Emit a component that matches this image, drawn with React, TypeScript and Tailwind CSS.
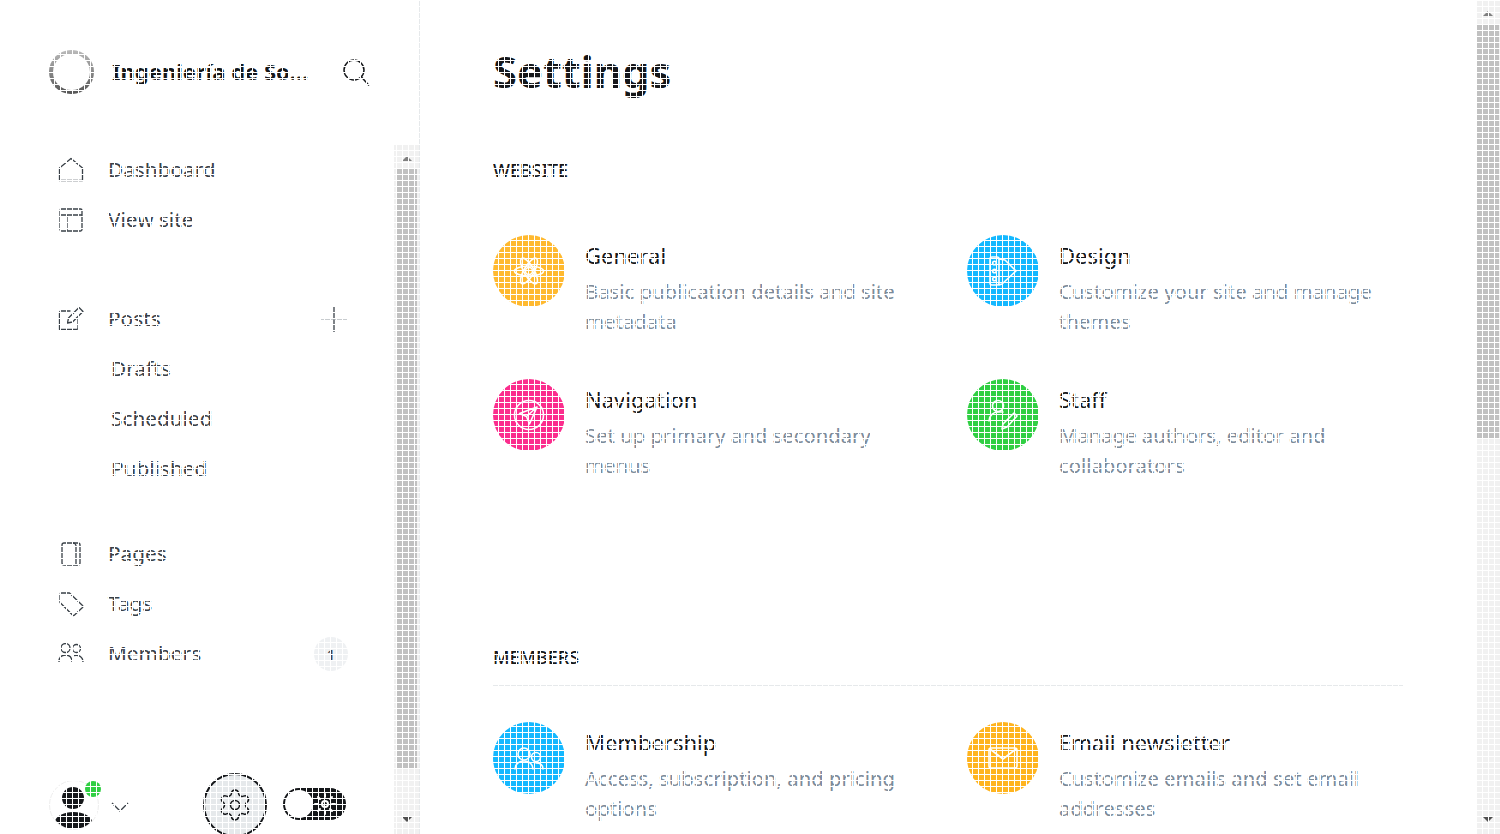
import { Settings } from "lucide-react";

const sans = "font-['Noto_Sans','Liberation_Sans',sans-serif]";

function HomeIcon() {
  return (
    <svg width="26" height="26" viewBox="0 0 26 26" fill="none" stroke="#394047" strokeWidth="1.3" strokeLinejoin="round">
      <path d="M1.5 11 13 1.5 24.5 11v12.500h-23z" />
    </svg>
  );
}
function SiteIcon() {
  return (
    <svg width="26" height="26" viewBox="0 0 26 26" fill="none" stroke="#394047" strokeWidth="1.3" strokeLinejoin="round">
      <rect x="2" y="2" width="22" height="22" rx="1.5" />
      <path d="M2 8h22M9 8v16" />
    </svg>
  );
}
function PostsIcon() {
  return (
    <svg width="26" height="26" viewBox="0 0 26 26" fill="none" stroke="#394047" strokeWidth="1.3" strokeLinejoin="round" strokeLinecap="round">
      <path d="M12 5H3a1.500 1.500 0 0 0-1.500 1.500v17h17a1.500 1.500 0 0 0 1.500-1.500v-9" />
      <path d="M9.500 17l1-5L21 1.500l4 4L14.500 16z" />
    </svg>
  );
}
function PagesIcon() {
  return (
    <svg width="26" height="26" viewBox="0 0 26 26" fill="none" stroke="#394047" strokeWidth="1.3" strokeLinejoin="round">
      <path d="M6 2h14a2 2 0 0 1 2 2v18a2 2 0 0 1-2 2h-2" />
      <path d="M6 2a2 2 0 0 0-2 2v18a2 2 0 0 0 2 2h12V5a3 3 0 0 0-3-3" />
    </svg>
  );
}
function TagIcon() {
  return (
    <svg width="26" height="26" viewBox="0 0 26 26" fill="none" stroke="#394047" strokeWidth="1.3" strokeLinejoin="round">
      <path d="M2 3.500A1.500 1.500 0 0 1 3.500 2h8L24.500 14.500a1.500 1.500 0 0 1 0 2L16.500 24a1.500 1.500 0 0 1-2 0L2 11.500z" />
    </svg>
  );
}
function MembersIcon() {
  return (
    <svg width="26" height="26" viewBox="0 0 26 26" fill="none" stroke="#394047" strokeWidth="1.3" strokeLinejoin="round">
      <circle cx="7.500" cy="7" r="4.500" />
      <circle cx="18.500" cy="7.500" r="4" />
      <path d="M1 21c0-5 3-7 6.500-7s6.500 2 6.500 7M16 14.500c5-1 9 1.500 9 6.500" />
    </svg>
  );
}

function SearchIcon() {
  return (
    <svg width="28" height="28" viewBox="0 0 28 28" fill="none" stroke="#15171a" strokeWidth="1.5">
      <circle cx="12" cy="11" r="10" />
      <path d="M19.500 18 27 26.500" />
    </svg>
  );
}

function NavRow({ icon, label, right }: { icon?: React.ReactNode; label: string; right?: React.ReactNode }) {
  return (
    <div className="flex h-[50px] items-center">
      {icon ? (
        <>
          <span className="ml-[58px] flex w-[50px] items-center">{icon}</span>
          <span className="text-[20.8px] text-[#394047]">{label}</span>
        </>
      ) : (
        <span className="ml-[111px] text-[20.8px] text-[#394047]">{label}</span>
      )}
      {right ? <span className="ml-auto flex w-[34px] items-center justify-center">{right}</span> : null}
    </div>
  );
}

function SettingItem({ color, icon, title, desc }: { color: string; icon: React.ReactNode; title: string; desc: React.ReactNode }) {
  return (
    <div className="flex h-[144px] w-[474px] pt-[1px]">
      <div className={`flex h-[72px] w-[72px] shrink-0 items-center justify-center rounded-full ${color}`}>{icon}</div>
      <div className="ml-[20px]">
        <div className="text-[22px] leading-[40px] text-[#15171a]">{title}</div>
        <div className="pt-[2px] text-[20.3px] leading-[29.5px] text-[#7c8b9a]">{desc}</div>
      </div>
    </div>
  );
}

const w = { fill: "none", stroke: "#fff", strokeWidth: 1.6, strokeLinejoin: "round", strokeLinecap: "round" } as const;

export default function App() {
  return (
    <div className={`relative flex h-[834px] w-[1500px] overflow-hidden bg-white ${sans}`}>
      <aside className="flex w-[420px] shrink-0 flex-col border-r border-[#e6e9eb]">
        <div className="flex h-[145px] shrink-0 items-start pt-[50px] pl-[49px]">
          <div className="h-[44px] w-[45px] rounded-full bg-[linear-gradient(#bbbbbb,#555555)] p-[4px]">
            <div className="h-full w-full rounded-full bg-white" />
          </div>
          <span className="ml-[18px] mt-[7px] w-[230px] text-[22px] font-bold leading-[28px] text-[#15171a]">Ingeniería de So...</span>
          <span className="mt-[9px]"><SearchIcon /></span>
        </div>
        <div className="flex min-h-0 flex-1">
          <div className="relative flex-1 pr-[46px]">
            <NavRow icon={<HomeIcon />} label="Dashboard" />
            <NavRow icon={<SiteIcon />} label="View site" />
            <div className="h-[49px]" />
            <NavRow
              icon={<PostsIcon />}
              label="Posts"
              right={
                <svg className="ml-[5px]" width="28" height="28" viewBox="0 0 28 28" stroke="#394047" strokeWidth="1.3">
                  <path d="M14 1v26" />
                  <path d="M1 14h26" stroke="#aab0b5" />
                </svg>
              }
            />
            <NavRow label="Drafts" />
            <NavRow label="Scheduled" />
            <NavRow label="Published" />
            <div className="h-[35px]" />
            <NavRow icon={<PagesIcon />} label="Pages" />
            <NavRow icon={<TagIcon />} label="Tags" />
            <NavRow
              icon={<MembersIcon />}
              label="Members"
              right={
                <span className="flex h-[34px] w-[34px] items-center justify-center rounded-full bg-[#eff1f3] text-[15px] font-medium text-[#394047]">1</span>
              }
            />
            <div className="absolute bottom-0 left-0 right-0 flex h-[66px] items-start">
              <div className="relative ml-[49px] mt-[12px] flex h-[50px] w-[50px] items-center justify-center overflow-hidden rounded-full border border-[#eeeeee] bg-white">
                <svg width="48" height="48" viewBox="0 0 48 48" fill="#15171a">
                  <circle cx="23" cy="17" r="11" />
                  <ellipse cx="23.500" cy="41" rx="18.500" ry="10" />
                </svg>
              </div>
              <span className="absolute left-[85px] top-[13px] h-[16px] w-[16px] rounded-full bg-[#30cf43]" />
              <svg className="ml-[12px] mt-[33px]" width="18" height="12" viewBox="0 0 18 12" fill="none" stroke="#394047" strokeWidth="1.3">
                <path d="M1 2l8 8 8-8" />
              </svg>
              <div className="ml-[74px] mt-[5px] flex h-[64px] w-[64px] shrink-0 items-center justify-center rounded-full border-[2px] border-[#15171a] bg-[#e6e9eb]">
                <Settings size={36} strokeWidth={1} color="#15171a" />
              </div>
              <div className="ml-[16px] mt-[20px] flex h-[32px] w-[63px] shrink-0 items-center justify-between rounded-full bg-[#15171a] pl-[2px] pr-[9px]">
                <span className="h-[28px] w-[28px] rounded-full bg-white" />
                <svg width="24" height="24" viewBox="0 0 24 24" fill="none" stroke="#fff" strokeWidth="2" strokeLinecap="round">
                  <circle cx="12" cy="12" r="3" />
                  <path d="M12 2v3M12 19v3M2 12h3M19 12h3M5 5l2 2M17 17l2 2M5 19l2-2M17 7l2-2" />
                </svg>
              </div>
            </div>
          </div>
          <div className="flex w-[25px] shrink-0 flex-col bg-[#f1f1f1]">
            <div className="flex h-[23px] items-center justify-center pt-[3px]">
              <span className="h-0 w-0 border-x-[5px] border-b-[5px] border-x-transparent border-b-[#7f7f7f]" />
            </div>
            <div className="mx-[2px] h-[600px] bg-[#c1c1c1]" />
            <div className="flex-1" />
            <div className="flex h-[30px] items-center justify-center">
              <span className="h-0 w-0 border-x-[5px] border-t-[5px] border-x-transparent border-t-[#505050]" />
            </div>
          </div>
        </div>
      </aside>

      <main className="min-w-0 flex-1 pl-[73px] pr-[73px]">
        <h1 className="mt-[42px] text-[43.5px] font-bold leading-[58px] text-[#15171a]">Settings</h1>
        <h2 className="mt-[57px] text-[18px] font-medium leading-[26px] text-[#15171a]">WEBSITE</h2>
        <div className="mt-[15px] h-px w-[910px] bg-[#e6e9eb]" />
        <div className="mt-[35px] flex w-[948px] flex-wrap">
          <SettingItem
            color="bg-[#ffb92f]"
            title="General"
            desc={<>Basic publication details and site<br />metadata</>}
            icon={
              <svg width="32" height="32" viewBox="0 0 32 32" {...w}>
                <circle cx="16" cy="16" r="3.5" />
                <ellipse cx="16" cy="16" rx="14.5" ry="5" />
                <ellipse cx="16" cy="16" rx="14.5" ry="5" transform="rotate(60 16 16)" />
                <ellipse cx="16" cy="16" rx="14.5" ry="5" transform="rotate(120 16 16)" />
              </svg>
            }
          />
          <SettingItem
            color="bg-[#14b8ff]"
            title="Design"
            desc={<>Customize your site and manage<br />themes</>}
            icon={
              <svg width="32" height="32" viewBox="0 0 32 32" {...w}>
                <rect x="3" y="2" width="9" height="28" rx="2" />
                <circle cx="7.5" cy="8" r="1.8" />
                <circle cx="7.5" cy="16" r="1.8" />
                <circle cx="7.5" cy="24" r="1.8" />
                <path d="M12 4l6 1 11 11-14 13-3 1" />
              </svg>
            }
          />
          <SettingItem
            color="bg-[#fb2d8d]"
            title="Navigation"
            desc={<>Set up primary and secondary<br />menus</>}
            icon={
              <svg width="32" height="32" viewBox="0 0 32 32" {...w}>
                <circle cx="16" cy="16" r="14.5" />
                <path d="M24 8 6.500 14.500l7 3 3 7.500zM24 8 13.500 17.500" />
              </svg>
            }
          />
          <SettingItem
            color="bg-[#30cf43]"
            title="Staff"
            desc={<>Manage authors, editor and<br />collaborators</>}
            icon={
              <svg width="32" height="32" viewBox="0 0 32 32" {...w}>
                <circle cx="11" cy="7" r="5.5" />
                <path d="M2 22c0-5 4-9 9-9h5" />
                <path d="M27 14 30 17 20 28l-5 2 1-5z" />
              </svg>
            }
          />
        </div>
        <h2 className="mt-[122px] text-[18px] font-medium leading-[26px] text-[#15171a]">MEMBERS</h2>
        <div className="mt-[15px] h-px w-[910px] bg-[#e6e9eb]" />
        <div className="mt-[35px] flex w-[948px] flex-wrap">
          <SettingItem
            color="bg-[#14b8ff]"
            title="Membership"
            desc={<>Access, subscription, and pricing<br />options</>}
            icon={
              <svg width="32" height="32" viewBox="0 0 32 32" {...w}>
                <circle cx="11" cy="12" r="6" />
                <circle cx="23" cy="15" r="4.5" />
                <path d="M2 27c0-5 4-8 9-8s9 3 9 8M23 21c4 0 7 2 7 6" />
              </svg>
            }
          />
          <SettingItem
            color="bg-[#ffb41f]"
            title="Email newsletter"
            desc={<>Customize emails and set email<br />addresses</>}
            icon={
              <svg width="32" height="32" viewBox="0 0 32 32" {...w}>
                <rect x="2" y="6" width="28" height="20" rx="2" />
                <path d="M3 7l13 10L29 7" />
              </svg>
            }
          />
        </div>
      </main>

      <div className="flex w-[24px] shrink-0 flex-col bg-[#f1f1f1]">
        <div className="flex h-[24px] items-center justify-center pt-[3px]">
          <span className="h-0 w-0 border-x-[5px] border-b-[5px] border-x-transparent border-b-[#7f7f7f]" />
        </div>
        <div className="mx-[1px] h-[414px] bg-[#c1c1c1]" />
        <div className="flex-1" />
        <div className="flex h-[30px] items-center justify-center">
          <span className="h-0 w-0 border-x-[5px] border-t-[5px] border-x-transparent border-t-[#505050]" />
        </div>
      </div>

      {/* white mesh that covers the whole shot */}
      <div className="pointer-events-none absolute inset-0 bg-[linear-gradient(#fff_1px,transparent_1px),linear-gradient(90deg,#fff_1px,transparent_1px)] bg-[size:6px_6px]" />
    </div>
  );
}
